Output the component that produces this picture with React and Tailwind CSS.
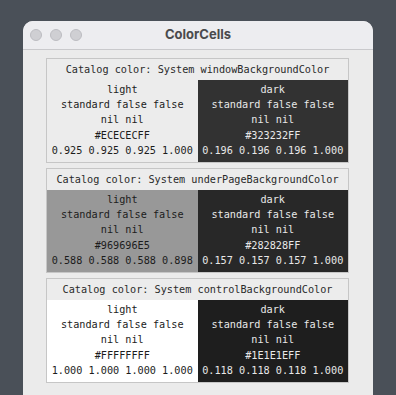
import React from "react";

const cards = [
  {
    name: "windowBackgroundColor",
    light: { bg: "bg-[#ECECEC]", text: "text-[#1c1c1c]", hex: "#ECECECFF", nums: "0.925 0.925 0.925 1.000" },
    dark: { bg: "bg-[#323232]", text: "text-[#e8e8e8]", hex: "#323232FF", nums: "0.196 0.196 0.196 1.000" },
  },
  {
    name: "underPageBackgroundColor",
    light: { bg: "bg-[#989898]", text: "text-[#1c1c1c]", hex: "#969696E5", nums: "0.588 0.588 0.588 0.898" },
    dark: { bg: "bg-[#282828]", text: "text-[#e8e8e8]", hex: "#282828FF", nums: "0.157 0.157 0.157 1.000" },
  },
  {
    name: "controlBackgroundColor",
    light: { bg: "bg-[#FFFFFF]", text: "text-[#1c1c1c]", hex: "#FFFFFFFF", nums: "1.000 1.000 1.000 1.000" },
    dark: { bg: "bg-[#1E1E1E]", text: "text-[#e8e8e8]", hex: "#1E1E1EFF", nums: "0.118 0.118 0.118 1.000" },
  },
];

function Cell({ label, c }) {
  return (
    <div className={`${c.bg} ${c.text} flex flex-col items-center pt-[2px] leading-[15.2px]`}>
      <div>{label}</div>
      <div>standard false false</div>
      <div>nil nil</div>
      <div>{c.hex}</div>
      <div>{c.nums}</div>
    </div>
  );
}

export default function App() {
  return (
    <div className="w-[396px] h-[395px] overflow-hidden bg-[#4a5058] pt-[21px] pl-[23px]">
      <div className="w-[350px] h-[400px] rounded-t-[10px] bg-[#ebebeb] overflow-hidden">
        <div className="h-[29px] bg-[#ededf0] border-b border-[#c9c9cc] flex items-center relative">
          <div className="flex gap-[8px] pl-[7px]">
            <div className="w-[12px] h-[12px] rounded-full bg-[#cfcfd3] border border-[#bcbcc1]" />
            <div className="w-[12px] h-[12px] rounded-full bg-[#cfcfd3] border border-[#bcbcc1]" />
            <div className="w-[12px] h-[12px] rounded-full bg-[#cfcfd3] border border-[#bcbcc1]" />
          </div>
          <div className="absolute inset-0 flex items-center justify-center font-['Inter',sans-serif] font-bold text-[13px] text-[#4a4a4d]">
            ColorCells
          </div>
        </div>
        <div className="flex flex-col gap-[5px] pt-[8px] pl-[23px] font-['DejaVu_Sans_Mono',monospace] text-[10.2px]">
          {cards.map((card) => (
            <div key={card.name} className="w-[303px] border border-[#c6c6c6] bg-[#ececec]">
              <div className="h-[21px] flex items-center justify-center text-[#2a2a2a] bg-[#ececec]">
                Catalog color: System {card.name}
              </div>
              <div className="grid grid-cols-2 h-[82px]">
                <Cell label="light" c={card.light} />
                <Cell label="dark" c={card.dark} />
              </div>
            </div>
          ))}
        </div>
      </div>
    </div>
  );
}
